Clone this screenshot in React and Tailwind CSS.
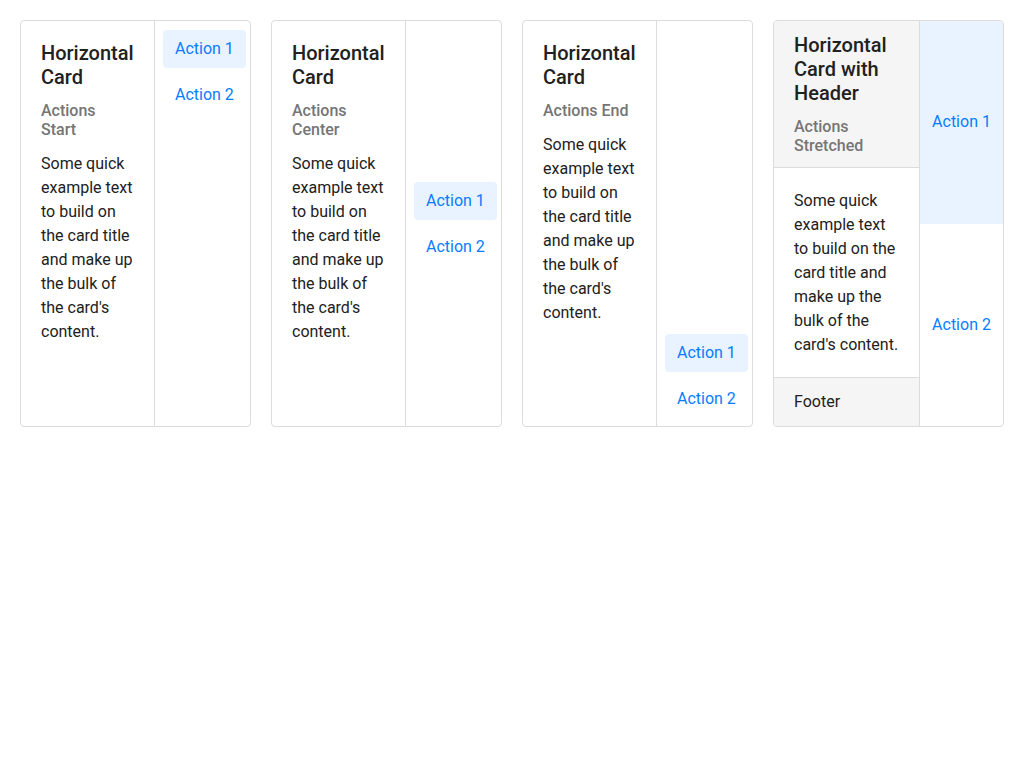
import React from "react";

const body =
  "Some quick example text to build on the card title and make up the bulk of the card's content.";

const ActionButton = ({ active, children }) => (
  <button
    type="button"
    className={
      active
        ? "px-3 py-[7px] text-[16px] leading-6 text-[#0a7cff] bg-[#e8f3ff] rounded-[4px] text-left whitespace-nowrap"
        : "px-3 py-[7px] text-[16px] leading-6 text-[#0a7cff] rounded-[4px] text-left whitespace-nowrap"
    }
  >
    {children}
  </button>
);

const Card = ({ subtitle, justify }) => (
  <div className="flex border border-[#dcdcdc] rounded-[4px] bg-white min-w-0">
    {/* content */}
    <div className="flex-1 min-w-0 p-5 border-r border-[#dcdcdc]">
      <h2 className="text-[20px] leading-6 font-medium text-[#212121]">Horizontal Card</h2>
      <h3 className="mt-3 text-[16px] leading-[19px] font-medium text-[#757575]">{subtitle}</h3>
      <p className="mt-[13px] text-[16px] leading-6 text-[#212121]">{body}</p>
    </div>
    {/* actions */}
    <div className={"w-[95px] shrink-0 flex flex-col gap-2 pl-2 " + justify}>
      <div>
        <ActionButton active>Action 1</ActionButton>
      </div>
      <div>
        <ActionButton>Action 2</ActionButton>
      </div>
    </div>
  </div>
);

const HeaderCard = () => (
  <div className="flex border border-[#dcdcdc] rounded-[4px] bg-white min-w-0 overflow-hidden">
    <div className="flex-1 min-w-0 flex flex-col border-r border-[#dcdcdc]">
      <header className="bg-[#f5f5f5] px-5 pt-3 pb-3 border-b border-[#dcdcdc]">
        <h2 className="text-[20px] leading-6 font-medium text-[#212121]">Horizontal Card with Header</h2>
        <h3 className="mt-3 text-[16px] leading-[19px] font-medium text-[#757575]">
          Actions Stretched
        </h3>
      </header>
      <div className="flex-1 px-5 pt-[21px] pb-5">
        <p className="text-[16px] leading-6 text-[#212121]">{body}</p>
      </div>
      <footer className="bg-[#f5f5f5] px-5 py-3 border-t border-[#dcdcdc] text-[16px] leading-6 text-[#212121]">
        Footer
      </footer>
    </div>
    <div className="w-[83px] shrink-0 flex flex-col">
      <button type="button" className="flex-1 px-3 text-[16px] leading-6 text-[#0a7cff] bg-[#e8f3ff] whitespace-nowrap">
        Action 1
      </button>
      <button type="button" className="flex-1 px-3 text-[16px] leading-6 text-[#0a7cff] whitespace-nowrap">
        Action 2
      </button>
    </div>
  </div>
);

export default function App() {
  return (
    <div className="min-h-screen bg-white p-5" style={{ fontFamily: "Roboto, 'Liberation Sans', sans-serif" }}>
      <div className="grid grid-cols-4 gap-5">
        <Card subtitle="Actions Start" justify="justify-start pt-[9px] pb-2" />
        <Card subtitle="Actions Center" justify="justify-center py-2" />
        <Card subtitle="Actions End" justify="justify-end py-2" />
        <HeaderCard />
      </div>
    </div>
  );
}
